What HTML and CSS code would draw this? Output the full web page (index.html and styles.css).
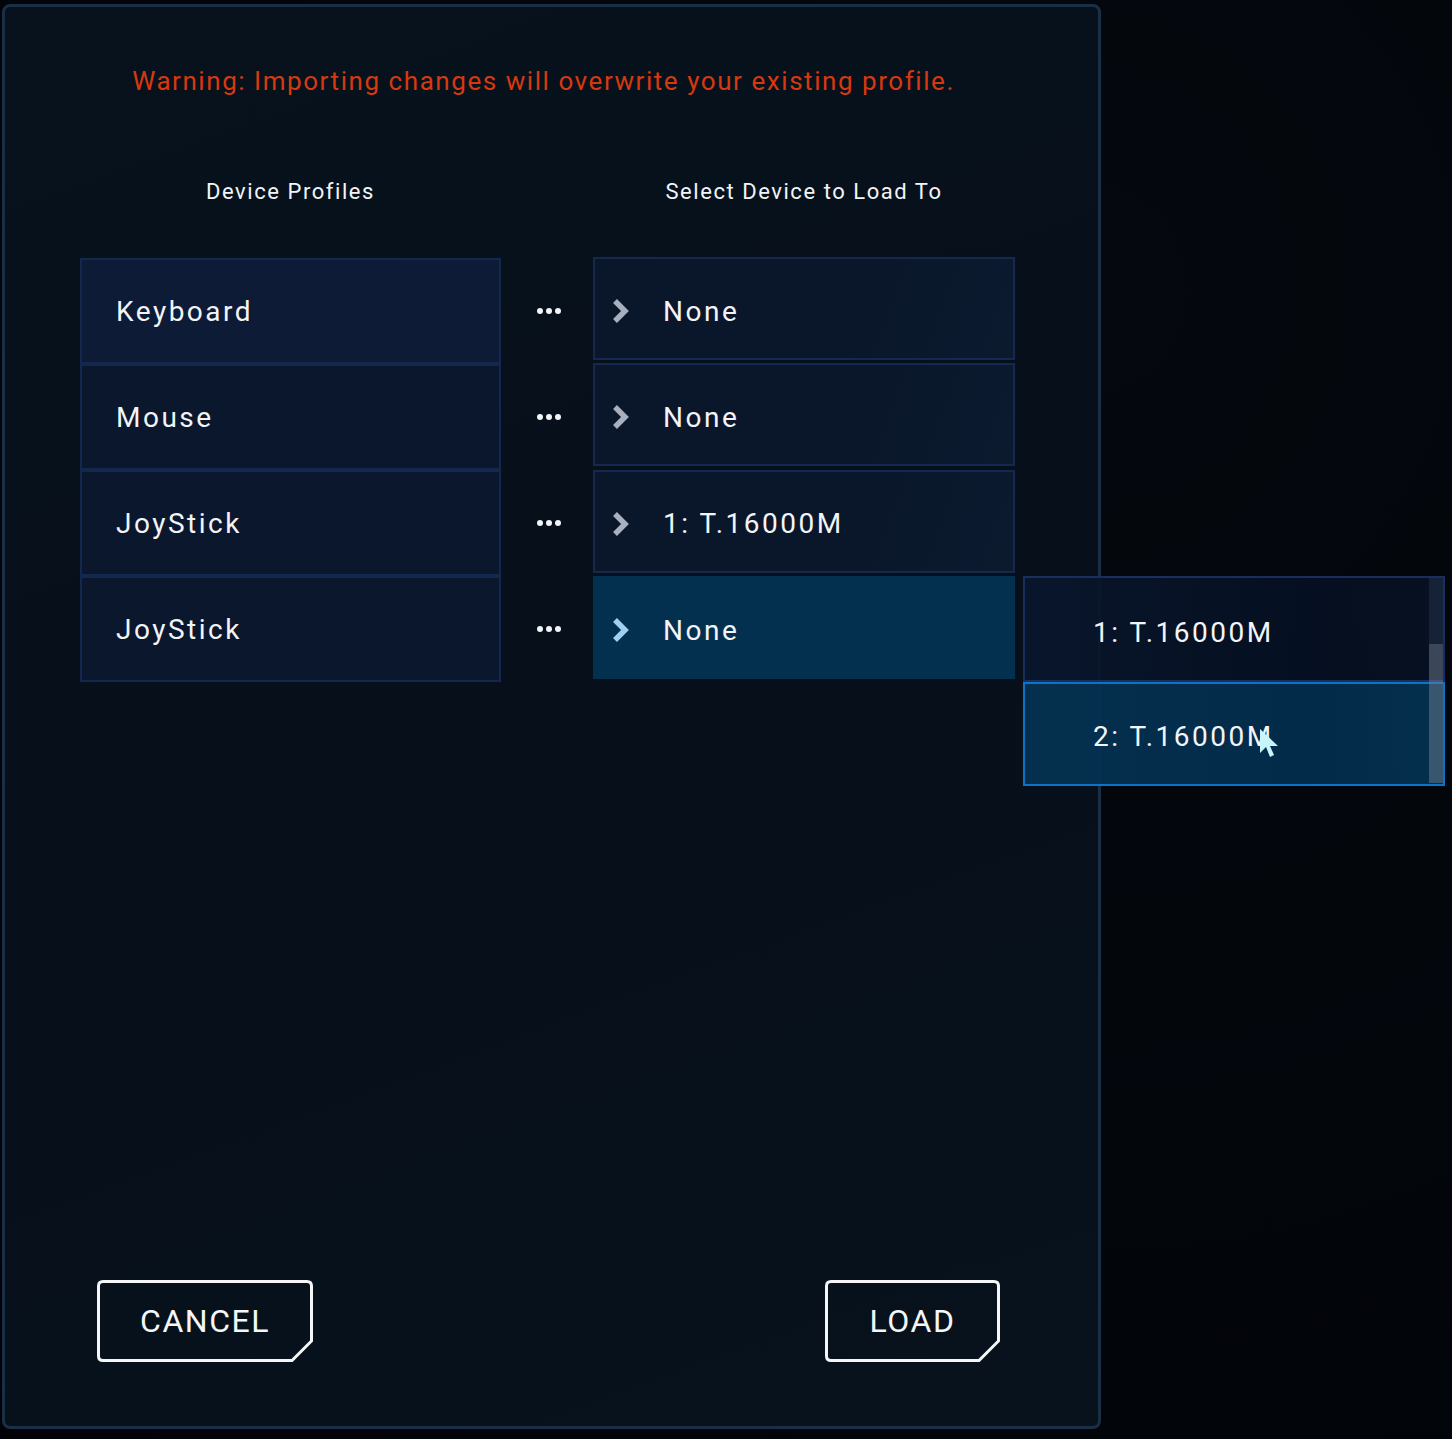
FILE: index.html
```html
<!DOCTYPE html>
<html lang="en">
<head>
<meta charset="utf-8">
<title>Import Profile</title>
<link rel="stylesheet" href="styles.css">
</head>
<body>
<div class="panel">
  <p class="warning">Warning: Importing changes will overwrite your existing profile.</p>
  <div class="table">
    <div class="col-left">
      <div class="col-title">Device Profiles</div>
      <div class="profile active">Keyboard</div>
      <div class="profile">Mouse</div>
      <div class="profile">JoyStick</div>
      <div class="profile">JoyStick</div>
    </div>
    <div class="col-mid">
      <div class="col-title">&nbsp;</div>
      <div class="dots"><i></i><i></i><i></i></div>
      <div class="dots"><i></i><i></i><i></i></div>
      <div class="dots"><i></i><i></i><i></i></div>
      <div class="dots"><i></i><i></i><i></i></div>
    </div>
    <div class="col-right">
      <div class="col-title">Select Device to Load To</div>
      <div class="target"><svg class="chev" viewBox="0 0 18 24"><polyline points="3,2 13,12 3,22"/></svg><span>None</span></div>
      <div class="target"><svg class="chev" viewBox="0 0 18 24"><polyline points="3,2 13,12 3,22"/></svg><span>None</span></div>
      <div class="target"><svg class="chev" viewBox="0 0 18 24"><polyline points="3,2 13,12 3,22"/></svg><span>1: T.16000M</span></div>
      <div class="target selected"><svg class="chev" viewBox="0 0 18 24"><polyline points="3,2 13,12 3,22"/></svg><span>None</span>
        <div class="dropdown">
          <div class="option">1: T.16000M</div>
          <div class="option hover">2: T.16000M
            <svg class="cursor" viewBox="0 0 20 30"><polygon points="1,1 1,25 7,19 11,29 15,27 11,18 19,18"/></svg>
          </div>
          <div class="scroll-track"></div>
          <div class="scroll-thumb"></div>
        </div>
      </div>
    </div>
  </div>
  <div class="actions">
    <button class="btn btn-cancel">
      <svg class="btn-frame" viewBox="0 0 216 82"><path d="M6,1.5 H210 Q214.5,1.5 214.5,6 V61 L195,80.5 H6 Q1.5,80.5 1.5,76 V6 Q1.5,1.5 6,1.5 Z"/></svg>
      <span>CANCEL</span>
    </button>
    <button class="btn btn-load">
      <svg class="btn-frame" viewBox="0 0 175 82"><path d="M6,1.5 H169 Q173.5,1.5 173.5,6 V61 L154,80.5 H6 Q1.5,80.5 1.5,76 V6 Q1.5,1.5 6,1.5 Z"/></svg>
      <span>LOAD</span>
    </button>
  </div>
</div>
</body>
</html>
```

FILE: styles.css
```css
html, body {
  margin: 0;
  padding: 0;
}
body {
  width: 1452px;
  height: 1439px;
  overflow: hidden;
  background: radial-gradient(ellipse at 75% 20%, #05090f 0%, #02050a 60%, #010308 100%);
  font-family: "Roboto", "Liberation Sans", sans-serif;
  color: #f2f4f7;
}
.panel {
  box-sizing: border-box;
  margin: 4px 0 0 2px;
  width: 1099px;
  height: 1425px;
  border: 3px solid #1a2e46;
  border-radius: 8px;
  background: linear-gradient(160deg, #08121c 0%, #07101a 50%, #08121c 100%);
  display: flex;
  flex-direction: column;
}
.warning {
  margin: 59px 0 0 0;
  text-align: center;
  padding-right: 16px;
  font-size: 26px;
  line-height: 30px;
  letter-spacing: 1.55px;
  color: #d6390f;
}
.table {
  margin-top: 81px;
  padding-left: 75px;
  display: grid;
  grid-template-columns: 421px 92px 422px;
}
.col-title {
  height: 30px;
  line-height: 30px;
  font-size: 22px;
  letter-spacing: 1.55px;
  text-align: center;
  margin-bottom: 51px;
}
.col-right .col-title {
  margin-bottom: 50px;
}
.profile {
  box-sizing: border-box;
  height: 106px;
  border: 2px solid #14284f;
  background: #0a172d;
  display: flex;
  align-items: center;
  padding-left: 34px;
  font-size: 28px;
  letter-spacing: 2.5px;
}
.profile.active {
  background: #0d1b37;
}
.dots {
  height: 106px;
  display: flex;
  align-items: center;
  justify-content: center;
  gap: 3px;
  padding-left: 4px;
}
.dots i {
  width: 6px;
  height: 6px;
  border-radius: 50%;
  background: #f2f4f7;
}
.target {
  position: relative;
  box-sizing: border-box;
  height: 103px;
  margin-bottom: 3.4px;
  border: 2px solid #142850;
  background: linear-gradient(110deg, #0a172b 0%, #0a172b 60%, #0b1a2e 100%);
  display: flex;
  align-items: center;
  padding-left: 17px;
  padding-top: 5px;
  font-size: 28px;
  letter-spacing: 2.5px;
}
.target .chev {
  width: 18px;
  height: 24px;
  margin-right: 33px;
  fill: none;
  stroke: #a9afbd;
  stroke-width: 5.5;
  stroke-linecap: butt;
  stroke-linejoin: miter;
}
.target.selected {
  border-color: #04304f;
  background: #04304f;
}
.target.selected .chev {
  stroke: #9fd0f2;
}
.dropdown {
  position: absolute;
  top: -2px;
  left: calc(100% + 10px);
  width: 422px;
  z-index: 5;
}
.option {
  position: relative;
  box-sizing: border-box;
  height: 105px;
  display: flex;
  align-items: center;
  padding-left: 68px;
  padding-top: 6px;
  font-size: 28px;
  letter-spacing: 2.5px;
}
.option:first-child {
  border: 2px solid rgba(26, 48, 96, 0.95);
  background: linear-gradient(90deg, rgba(9, 22, 44, 0.93) 0%, rgba(5, 16, 34, 0.93) 70%, rgba(8, 18, 34, 0.93) 100%);
  height: 106px;
}
.option.hover {
  height: 104px;
  padding-top: 4px;
  border: 2px solid #0c73c7;
  background: linear-gradient(90deg, rgba(4, 50, 82, 0.93) 0%, rgba(2, 46, 78, 0.93) 70%, rgba(4, 50, 82, 0.93) 100%);
}
.scroll-track {
  position: absolute;
  right: 2px;
  top: 2px;
  width: 14px;
  height: 66px;
  background: rgba(40, 55, 85, 0.45);
}
.scroll-thumb {
  position: absolute;
  right: 2px;
  top: 68px;
  width: 14px;
  height: 139px;
  background: rgba(110, 125, 145, 0.5);
}
.cursor {
  position: absolute;
  left: 234px;
  top: 44px;
  width: 20px;
  height: 30px;
  fill: #c6f5fb;
}
.actions {
  margin-top: auto;
  padding: 0 98px 64px 92px;
  display: flex;
  justify-content: space-between;
}
.btn {
  position: relative;
  height: 82px;
  padding: 0;
  border: none;
  background: transparent;
  color: #f4f6f8;
  font-family: "Roboto", "Liberation Sans", sans-serif;
  font-size: 32px;
  letter-spacing: 1.5px;
  display: flex;
  align-items: center;
  justify-content: center;
}
.btn-cancel {
  width: 216px;
}
.btn-load {
  width: 175px;
}
.btn span {
  position: relative;
  padding-bottom: 1px;
}
.btn-frame {
  position: absolute;
  left: 0;
  top: 0;
  width: 100%;
  height: 100%;
  fill: none;
  stroke: #f4f6f8;
  stroke-width: 3;
}
```
